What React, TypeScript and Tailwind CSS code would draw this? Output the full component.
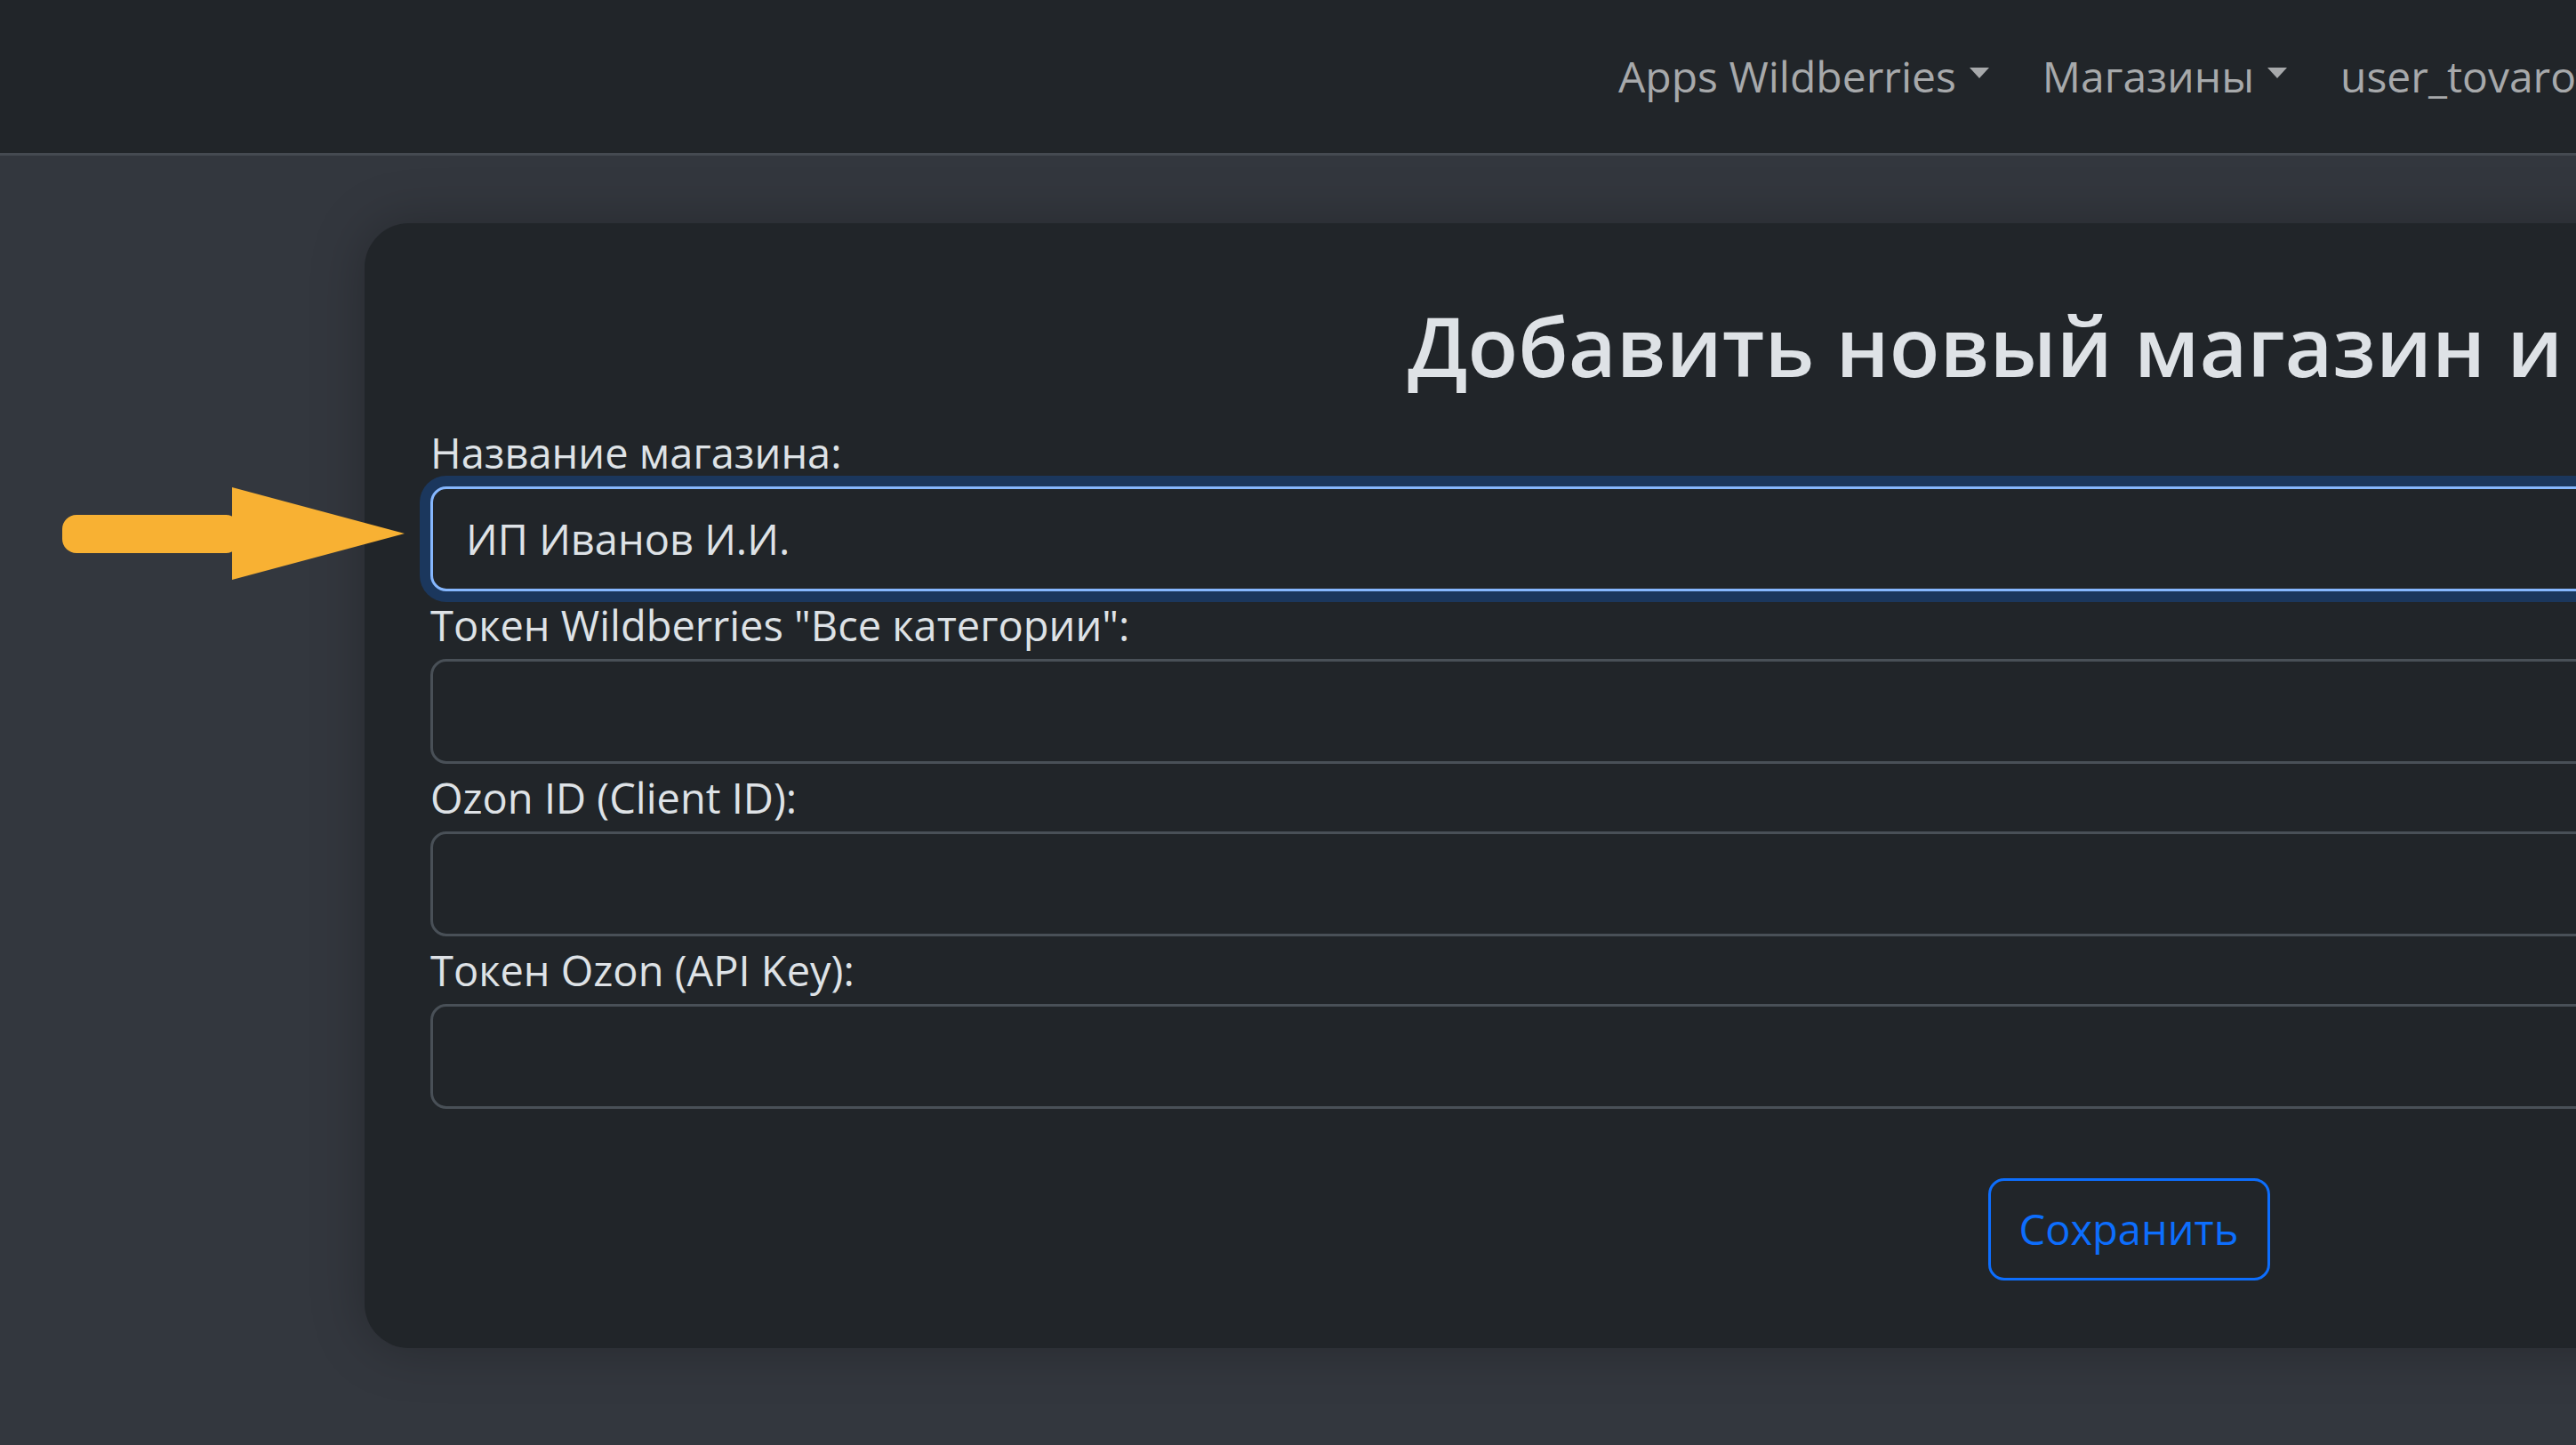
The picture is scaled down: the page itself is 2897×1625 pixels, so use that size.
import React from "react";

const font = "font-['Open_Sans','Noto_Sans',sans-serif]";

function NavItem({ label, caret }: { label: string; caret?: boolean }) {
  return (
    <li className="flex items-center gap-[15px] whitespace-nowrap">
      <span>{label}</span>
      {caret && (
        <span className="mb-[8px] inline-block h-0 w-0 border-x-[11px] border-t-[12px] border-x-transparent border-t-[#a7a9ab]" />
      )}
    </li>
  );
}

function Field({
  label,
  value,
  focused,
}: {
  label: string;
  value?: string;
  focused?: boolean;
}) {
  return (
    <div className="flex flex-col">
      <label className="h-[76px] text-[47px] leading-[76px] text-[#dee2e6] whitespace-nowrap">
        {label}
      </label>
      <input
        readOnly
        value={value ?? ""}
        className={`h-[118px] w-full rounded-[18px] border-[3px] bg-[#212529] px-[37px] text-[47px] text-[#dee2e6] outline-none ${
          focused
            ? "border-[#86b7fe] shadow-[0_0_0_12px_rgba(13,110,253,0.25)]"
            : "border-[#495057]"
        }`}
      />
    </div>
  );
}

export default function App() {
  return (
    <div
      className={`relative h-[1625px] w-[2897px] overflow-hidden bg-[#33373e] ${font}`}
    >
      {/* Navbar */}
      <nav className="flex h-[175px] items-center border-b-[3px] border-[#454a51] bg-[#212529]">
        <ul className="ml-[1820px] flex items-center gap-[60px] text-[48px] text-[#a7a9ab]">
          <NavItem label="Apps Wildberries" caret />
          <NavItem label="Магазины" caret />
          <NavItem label="user_tovarov" />
        </ul>
      </nav>

      {/* Card */}
      <div className="ml-[410px] mt-[76px] w-[3968px] rounded-[50px] bg-[#212529] px-[74px] pb-[76px] pt-[82px] shadow-[0_0_60px_rgba(0,0,0,0.25)]">
        <h2 className="mb-[26px] pl-[48px] text-center text-[93px] font-semibold leading-[1.2] text-[#dee2e6] whitespace-nowrap">
          Добавить новый магазин и токены
        </h2>

        <div className="flex flex-col">
          <Field label="Название магазина:" value="ИП Иванов И.И." focused />
          <Field label={'Токен Wildberries "Все категории":'} />
          <Field label="Ozon ID (Client ID):" />
          <Field label="Токен Ozon (API Key):" />
        </div>

        <div className="mt-[78px] flex justify-center">
          <button className="h-[115px] w-[317px] rounded-[18px] border-[3px] border-[#0d6efd] text-[47px] text-[#0d6efd]">
            Сохранить
          </button>
        </div>
      </div>

      {/* Arrow annotation */}
      <svg
        className="absolute left-[70px] top-[548px]"
        width="386"
        height="104"
        viewBox="0 0 386 104"
      >
        <rect x="0" y="31" width="200" height="43" rx="16" fill="#f8b133" />
        <path d="M191 0 L385 52 L191 104 Z" fill="#f8b133" />
      </svg>
    </div>
  );
}
